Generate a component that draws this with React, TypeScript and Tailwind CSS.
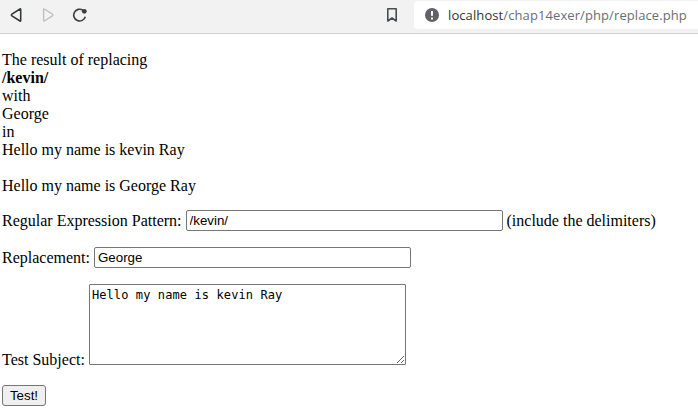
import React from "react";

function Toolbar() {
  return (
    <header className="flex h-[34px] items-start border-b border-[#d1d1d1] bg-[#f2f2f2]">
      <div className="flex h-[30px] flex-1 items-center">
        <svg className="ml-2 h-4 w-4" viewBox="0 0 16 16" fill="none" stroke="#343a40" strokeWidth="1.6" strokeLinejoin="round">
          <path d="M12.7 2.4v11.2q0 .8-.7.4L3.9 8.8q-1-.8 0-1.6L12 2q.7-.4.7.4Z" />
        </svg>
        <svg className="ml-4 h-4 w-4" viewBox="0 0 16 16" fill="none" stroke="#c0c0c0" strokeWidth="1.4" strokeLinejoin="round">
          <path d="M3.6 2.4v11.2q0 .8.7.4l8.1-5.2q1-.8 0-1.6L4.3 2q-.7-.4-.7.4Z" />
        </svg>
        <svg className="ml-4 h-4 w-4" viewBox="0 0 16 16" fill="none" stroke="#3b3e42" strokeWidth="1.6">
          <path d="M10.9 3.2A5.9 5.9 0 1 0 13.3 9.7" />
          <circle cx="12.3" cy="4.3" r="2.4" fill="#3b3e42" stroke="none" />
        </svg>
      </div>
      <svg className="mt-[7px] h-4 w-4" viewBox="0 0 16 16" fill="none" stroke="#4a4d51" strokeWidth="1.6" strokeLinejoin="round">
        <path d="M3.8 1.8h8.4v12.2L8 11l-4.2 3Z" />
      </svg>
      <div className="mt-px ml-[14px] flex h-7 w-[284px] items-center rounded-l bg-white">
        <svg className="ml-[11px] h-[14px] w-[14px]" viewBox="0 0 14 14">
          <circle cx="7" cy="7" r="7" fill="#5f6368" />
          <path d="M7 3v4.7M7 9.5v2" stroke="white" strokeWidth="2" />
        </svg>
        <span className="ml-[9px] whitespace-nowrap font-['Open_Sans',sans-serif] text-[13px] leading-5 tracking-[0.095px] text-[#6b6e72]">
          <span className="text-[#303336]">localhost</span>/chap14exer/php/replace.php
        </span>
      </div>
    </header>
  );
}

const field =
  "ml-1 h-[21px] w-[317px] rounded-[2px] border border-[#767676] bg-white px-[3px] font-['Liberation_Sans',Arial,sans-serif] text-[13.333px] leading-[15px] outline-none";

export default function App() {
  return (
    <div className="h-[410px] w-[698px] overflow-hidden bg-white font-['Liberation_Serif','Times_New_Roman',serif] text-base leading-[18px] text-black">
      <Toolbar />
      <main className="pt-[17px] pl-0.5">
        <p>
          The result of replacing<br />
          <b>/kevin/</b><br />
          with<br />
          George<br />
          in<br />
          Hello my name is kevin Ray<br />
          <br />
          Hello my name is George Ray
        </p>
        <form className="mt-[15px] flex flex-col gap-4" onSubmit={(e) => e.preventDefault()}>
          <div className="flex h-[21px] items-center">
            <label htmlFor="pattern">Regular Expression Pattern:</label>
            <input id="pattern" className={field} defaultValue="/kevin/" />
            <span className="ml-1">(include the delimiters)</span>
          </div>
          <div className="flex h-[21px] items-center">
            <label htmlFor="replacement">Replacement:</label>
            <input id="replacement" className={field} defaultValue="George" />
          </div>
          <div className="flex h-[81px] items-end">
            <label htmlFor="subject" className="-mb-1">Test Subject:</label>
            <textarea
              id="subject"
              className="ml-1 h-[81px] w-[317px] rounded-[1px] border border-[#767676] bg-white p-0.5 pt-[3px] font-['DejaVu_Sans_Mono',monospace] text-[12px] leading-[15px] tracking-[0.105px] outline-none"
              defaultValue="Hello my name is kevin Ray"
            />
          </div>
          <button className="mt-1 h-[21px] w-11 rounded-[3px] border border-[#767676] bg-[#efefef] font-['Liberation_Sans',Arial,sans-serif] text-[13.333px] leading-[15px]">
            Test!
          </button>
        </form>
      </main>
    </div>
  );
}
